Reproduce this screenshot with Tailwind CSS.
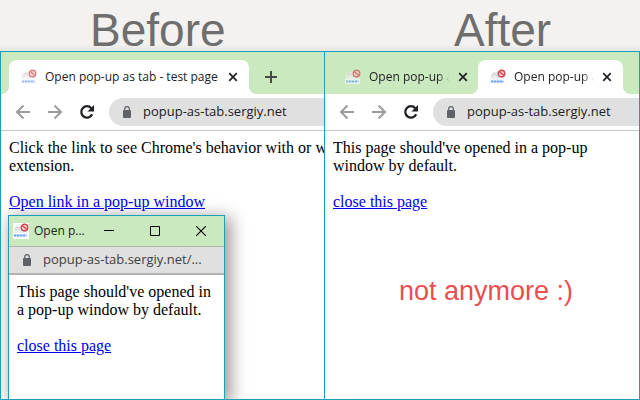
<!DOCTYPE html>
<html lang="en">
<head>
  <meta charset="UTF-8">
  <meta name="viewport" content="width=device-width, initial-scale=1">
  <title>Open pop-up as tab</title>
  <script src="https://cdn.jsdelivr.net/npm/@tailwindcss/browser@4"></script>
</head>
<body class="flex min-h-screen flex-col bg-[#f3f2f0] font-['Open_Sans',sans-serif] text-[#202124]">
  <!-- shared icons -->
  <svg class="hidden" aria-hidden="true">
    <symbol id="favicon" viewBox="0 0 16 16">
      <path d="M1 5.500 2.500 4 4 2.500l3 .5 3-.5 4 2.500.5 6H.500z" fill="#e6e6e8"/>
      <path d="M1 6h13.500v5H.500z" fill="#efeff0"/>
      <path d="M2 7h2M5 6h2M8 7.500h2M3 4.500h2M11 8.500h2" stroke="#cdcdd2"/>
      <path d="M0 10h15v5H0z" fill="#f7f9fd"/>
      <path d="M1 12.500h12.500" stroke="#66a3f5" stroke-width="2" stroke-dasharray="2.500 .5"/>
      <circle cx="11.500" cy="4.500" r="3.300" fill="#f6d5d5" stroke="#d9474d" stroke-width="1.400"/>
      <path d="m9.300 2.500 4.500 4" stroke="#d9474d" stroke-width="1.500"/>
    </symbol>
    <symbol id="back" viewBox="0 0 16 16">
      <path d="M15 8H2.500M8.500 1.500 2 8l6.500 6.500" fill="none" stroke="currentColor" stroke-width="2"/>
    </symbol>
    <symbol id="reload" viewBox="0 0 16 16">
      <path d="M13.200 10.200A5.700 5.700 0 1 1 12.300 4.200" fill="none" stroke="currentColor" stroke-width="2.200"/>
      <path d="M15 1v6.500H8.500z" fill="currentColor"/>
    </symbol>
    <symbol id="lock" viewBox="0 0 10 12">
      <rect x="1" y="4" width="8" height="8" rx="1" fill="currentColor"/>
      <path d="M2.700 5V3a2.300 2.300 0 0 1 4.600 0v2" fill="none" stroke="currentColor" stroke-width="1.200"/>
    </symbol>
    <symbol id="close" viewBox="0 0 10 10">
      <path d="m1.200 1.200 7.600 7.600M8.800 1.200 1.200 8.800" stroke="currentColor" stroke-width="1.700"/>
    </symbol>
  </svg>

  <header class="grid h-[51px] grid-cols-[81fr_79fr] bg-linear-to-b from-[#f3f2f0] from-85% to-[#e6e6e5] font-['Liberation_Sans',sans-serif] text-[46px] leading-[60px] text-[#6e6e6e]">
    <h1 class="pl-[90px]">Before</h1>
    <h1 class="pl-[130px]">After</h1>
  </header>

  <main class="grid flex-1 grid-cols-[81fr_79fr] border-y border-[#1a9fbd] bg-white">
    <!-- Before -->
    <section class="relative flex min-w-0 flex-col overflow-hidden border-l border-[#1a9fbd]">
      <div class="flex h-[42px] items-end bg-[#cbe9bf] pl-2">
        <div class="relative flex h-[34px] w-[240px] items-center gap-2 rounded-t-lg bg-white pr-[11px] pl-3 before:absolute before:bottom-0 before:-left-2 before:size-2 before:bg-[radial-gradient(circle_at_0_0,transparent_8px,white_8px)] after:absolute after:-right-2 after:bottom-0 after:size-2 after:bg-[radial-gradient(circle_at_100%_0,transparent_8px,white_8px)]">
          <svg class="size-4 shrink-0 opacity-70"><use href="#favicon"/></svg>
          <span class="flex-1 whitespace-nowrap text-[12px]">Open pop-up as tab - test page</span>
          <button aria-label="Close tab"><svg class="size-[10px]"><use href="#close"/></svg></button>
        </div>
        <button aria-label="New tab" class="ml-2 flex h-[34px] w-7 items-center justify-center">
          <svg class="size-3" viewBox="0 0 12 12"><path d="M6 0v12M0 6h12" stroke="#454b44" stroke-width="2"/></svg>
        </button>
      </div>
      <div class="flex items-center gap-1 border-b border-[#c6c6c6] py-1 pl-2">
        <button aria-label="Back" class="flex size-7 shrink-0 items-center justify-center text-[#9b9b9b]"><svg class="size-4"><use href="#back"/></svg></button>
        <button aria-label="Forward" class="flex size-7 shrink-0 items-center justify-center text-[#9b9b9b]"><svg class="size-4 rotate-180"><use href="#back"/></svg></button>
        <button aria-label="Reload" class="flex size-7 shrink-0 items-center justify-center"><svg class="size-4"><use href="#reload"/></svg></button>
        <label class="ml-1 flex h-7 min-w-0 flex-1 items-center gap-[11px] rounded-l-full bg-[#e0e0e0] pl-[13px]">
          <svg class="h-3 w-[10px] shrink-0 text-[#5f6368]"><use href="#lock"/></svg>
          <input aria-label="Address" value="popup-as-tab.sergiy.net" class="w-full min-w-0 bg-transparent text-[13px] outline-none">
        </label>
      </div>
      <div class="p-2 font-['Liberation_Serif',serif] text-[16px] leading-[18px] whitespace-nowrap text-black">
        <p>Click the link to see Chrome's behavior with or w<br>extension.</p>
        <a href="#" class="mt-[18px] inline-block text-[#0000ee] underline">Open link in a pop-up window</a>
      </div>

      <!-- pop-up window -->
      <div class="absolute top-[163px] bottom-0 left-[7px] flex w-[217px] flex-col border border-b-0 border-[#1a9fbd] bg-white shadow-[4px_4px_16px_2px_rgba(0,0,0,0.4)]">
        <div class="flex h-[30px] items-center bg-[#cbe9bf] pl-1">
          <svg class="mr-[5px] size-4 shrink-0 bg-white"><use href="#favicon"/></svg>
          <span class="flex-1 whitespace-nowrap text-[12px]">Open p...</span>
          <button aria-label="Minimize" class="flex h-full w-[46px] shrink-0 items-center justify-center"><svg class="size-[10px]" viewBox="0 0 10 10"><path d="M0 4.500h10" stroke="#000"/></svg></button>
          <button aria-label="Maximize" class="flex h-full w-[46px] shrink-0 items-center justify-center"><svg class="size-[10px]" viewBox="0 0 10 10"><path d="M.5.5h9v9h-9z" fill="none" stroke="#000"/></svg></button>
          <button aria-label="Close window" class="flex h-full w-[46px] shrink-0 items-center justify-center"><svg class="size-[10px]" viewBox="0 0 10 10"><path d="m0 0 10 10M10 0 0 10" stroke="#000" stroke-width="1.100"/></svg></button>
        </div>
        <label class="flex h-[29px] items-center gap-[11px] border-t border-b-2 border-[#b3b3b3] bg-[#e0e0e0] pl-[13px]">
          <svg class="h-3 w-[10px] shrink-0 text-[#5f6368]"><use href="#lock"/></svg>
          <input aria-label="Pop-up address" value="popup-as-tab.sergiy.net/..." class="w-full min-w-0 bg-transparent text-[13px] text-[#3c4043] outline-none">
        </label>
        <div class="p-2 font-['Liberation_Serif',serif] text-[16px] leading-[18px] text-black">
          <p>This page should've opened in a pop-up window by default.</p>
          <a href="#" class="mt-[18px] inline-block text-[#0000ee] underline">close this page</a>
        </div>
      </div>
    </section>

    <!-- After -->
    <section class="flex min-w-0 flex-col overflow-hidden border-x border-[#1a9fbd]">
      <div class="flex h-[42px] items-end bg-[#cbe9bf] pl-2">
        <div class="flex h-[34px] w-[145px] items-center gap-2 pr-[10px] pl-3">
          <svg class="size-4 shrink-0 opacity-70"><use href="#favicon"/></svg>
          <span class="min-w-0 flex-1 overflow-hidden mask-r-from-85% whitespace-nowrap text-[12px]">Open pop-up a</span>
          <button aria-label="Close tab"><svg class="size-[10px]"><use href="#close"/></svg></button>
        </div>
        <div class="relative flex h-[34px] w-[145px] items-center gap-2 rounded-t-lg bg-white pr-[11px] pl-3 before:absolute before:bottom-0 before:-left-2 before:size-2 before:bg-[radial-gradient(circle_at_0_0,transparent_8px,white_8px)] after:absolute after:-right-2 after:bottom-0 after:size-2 after:bg-[radial-gradient(circle_at_100%_0,transparent_8px,white_8px)]">
          <svg class="size-4 shrink-0"><use href="#favicon"/></svg>
          <span class="min-w-0 flex-1 overflow-hidden mask-r-from-85% whitespace-nowrap text-[12px]">Open pop-up a</span>
          <button aria-label="Close tab"><svg class="size-[10px]"><use href="#close"/></svg></button>
        </div>
      </div>
      <div class="flex items-center gap-1 border-b border-[#c6c6c6] py-1 pl-2">
        <button aria-label="Back" class="flex size-7 shrink-0 items-center justify-center text-[#9b9b9b]"><svg class="size-4"><use href="#back"/></svg></button>
        <button aria-label="Forward" class="flex size-7 shrink-0 items-center justify-center text-[#9b9b9b]"><svg class="size-4 rotate-180"><use href="#back"/></svg></button>
        <button aria-label="Reload" class="flex size-7 shrink-0 items-center justify-center"><svg class="size-4"><use href="#reload"/></svg></button>
        <label class="ml-1 flex h-7 min-w-0 flex-1 items-center gap-[11px] rounded-l-full bg-[#e0e0e0] pl-[13px]">
          <svg class="h-3 w-[10px] shrink-0 text-[#5f6368]"><use href="#lock"/></svg>
          <input aria-label="Address" value="popup-as-tab.sergiy.net" class="w-full min-w-0 bg-transparent text-[13px] outline-none">
        </label>
      </div>
      <div class="max-w-[280px] p-2 font-['Liberation_Serif',serif] text-[16px] leading-[18px] text-black">
        <p>This page should've opened in a pop-up window by default.</p>
        <a href="#" class="mt-[18px] inline-block text-[#0000ee] underline">close this page</a>
      </div>
      <p class="mt-[54px] pl-2 text-center font-['Liberation_Sans',sans-serif] text-[27px] leading-9 text-[#e94f4f]">not anymore :)</p>
    </section>
  </main>
</body>
</html>
